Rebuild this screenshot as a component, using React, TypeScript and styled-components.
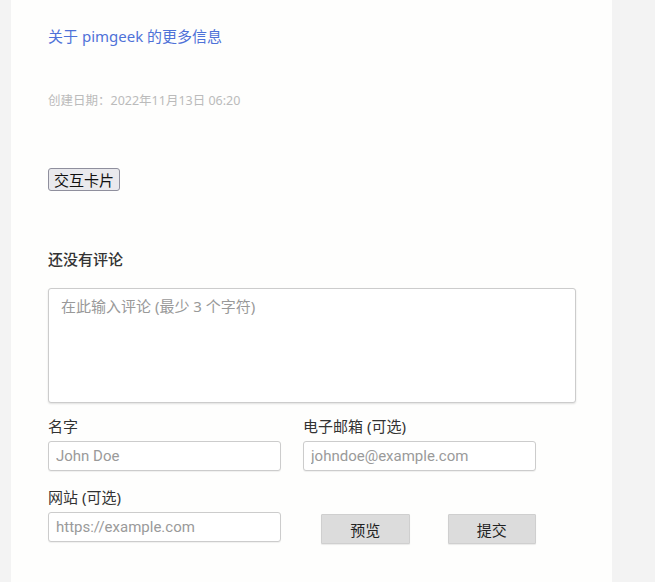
import React from 'react';
import styled, { createGlobalStyle } from 'styled-components';

const GlobalStyle = createGlobalStyle`
  html, body {
    margin: 0;
    padding: 0;
    background: #f3f3f3;
  }
  body {
    font-family: "Noto Sans", "Noto Sans CJK SC", sans-serif;
    color: #333;
  }
`;

const Page = styled.div`
  padding-left: 11px;
`;

const Card = styled.main`
  width: 601px;
  min-height: 100vh;
  box-sizing: border-box;
  background: #fefefd;
  padding: 26px 36px 40px 37px;
`;

const MoreLink = styled.a`
  display: block;
  font-size: 15px;
  line-height: 21px;
  color: #4e72d8;
  text-decoration: none;
`;

const CreatedAt = styled.p`
  margin: 45px 0 0;
  font-size: 12.5px;
  line-height: 18px;
  color: #bbb;
`;

const CardButton = styled.button`
  display: block;
  margin-top: 58px;
  padding: 1px 5px;
  font-family: "Noto Sans CJK SC", sans-serif;
  font-size: 15px;
  line-height: 19px;
  color: #111;
  background: #e9e9ed;
  border: 1px solid #8f8f9d;
  border-radius: 3px;
`;

const Heading = styled.h3`
  margin: 57px 0 0;
  font-size: 15px;
  line-height: 22px;
  font-weight: 500;
  color: #333;
`;

const CommentBox = styled.textarea`
  display: block;
  box-sizing: border-box;
  width: 528px;
  height: 115px;
  margin-top: 18px;
  padding: 6px 12px;
  font-family: "Noto Sans", "Noto Sans CJK SC", sans-serif;
  font-size: 15px;
  line-height: 22px;
  border: 1px solid #ccc;
  border-radius: 3px;
  box-shadow: 0 1px 2px rgba(0, 0, 0, 0.12);
  resize: none;
  &::placeholder {
    color: #999;
  }
`;

const FormGrid = styled.div`
  display: grid;
  grid-template-columns: 233px 233px;
  column-gap: 22px;
  row-gap: 15px;
  margin-top: 12px;
`;

const Field = styled.label`
  display: flex;
  flex-direction: column;
  gap: 4px;
`;

const FieldLabel = styled.span`
  font-size: 15px;
  line-height: 22px;
  color: #333;
`;

const TextInput = styled.input`
  box-sizing: border-box;
  width: 233px;
  height: 30px;
  padding: 0 7px;
  font-family: Roboto, "Noto Sans", sans-serif;
  font-size: 15px;
  border: 1px solid #ccc;
  border-radius: 3px;
  box-shadow: 0 1px 1px rgba(0, 0, 0, 0.06);
  &::placeholder {
    color: #9a9a9a;
  }
`;

const Actions = styled.div`
  display: flex;
  align-items: flex-end;
  gap: 38px;
  padding: 0 0 0 18px;
`;

const ActionButton = styled.button`
  width: 90px;
  height: 30px;
  margin-bottom: -2px;
  font-family: "Noto Sans CJK SC", sans-serif;
  font-size: 15px;
  color: #222;
  background: #dcdcdc;
  border: 1px solid #cfcfcf;
  border-radius: 1px;
  box-shadow: 0 1px 1px rgba(0, 0, 0, 0.08);
`;

const App: React.FC = () => {
  return (
    <Page>
      <GlobalStyle />
      <Card>
        <MoreLink href="#">关于 pimgeek 的更多信息</MoreLink>
        <CreatedAt>创建日期：2022年11月13日 06:20</CreatedAt>
        <CardButton>交互卡片</CardButton>

        <Heading>还没有评论</Heading>
        <CommentBox placeholder="在此输入评论 (最少 3 个字符)" />

        <FormGrid>
          <Field>
            <FieldLabel>名字</FieldLabel>
            <TextInput placeholder="John Doe" />
          </Field>
          <Field>
            <FieldLabel>电子邮箱 (可选)</FieldLabel>
            <TextInput placeholder="johndoe@example.com" />
          </Field>
          <Field>
            <FieldLabel>网站 (可选)</FieldLabel>
            <TextInput placeholder="https://example.com" />
          </Field>
          <Actions>
            <ActionButton>预览</ActionButton>
            <ActionButton>提交</ActionButton>
          </Actions>
        </FormGrid>
      </Card>
    </Page>
  );
};

export default App;
